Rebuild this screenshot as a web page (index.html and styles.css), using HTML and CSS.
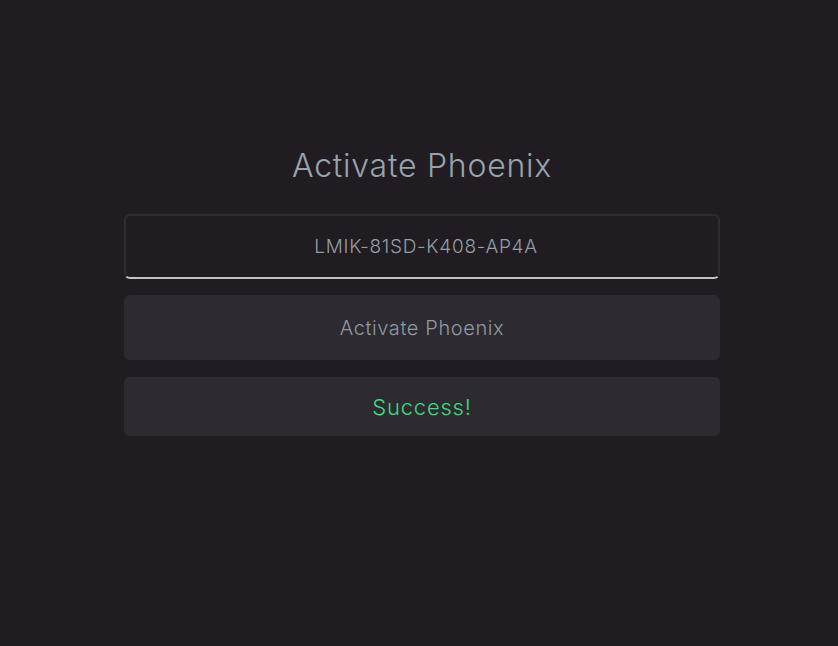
FILE: index.html
```html
<!DOCTYPE html>
<html>
<head>
<meta charset="utf-8">
<link rel="stylesheet" href="styles.css">
</head>
<body>
<main class="page">
  <section class="panel">
    <h1 class="title">Activate Phoenix</h1>
    <input class="key-input" type="text" value="LMIK-81SD-K408-AP4A">
    <button class="activate-btn">Activate Phoenix</button>
    <div class="status">Success!</div>
  </section>
</main>
</body>
</html>
```
FILE: styles.css
```css
html, body {
  margin: 0;
  padding: 0;
  background: #201c22;
  height: 100%;
}
body {
  font-family: "Inter", "Open Sans", sans-serif;
  font-weight: 300;
}
.page {
  display: flex;
  justify-content: center;
  padding-top: 142px;
  padding-left: 6px;
}
.panel {
  width: 596px;
  display: flex;
  flex-direction: column;
}
.title {
  margin: 0 0 24px 0;
  text-align: center;
  font-weight: 300;
  font-size: 32px;
  line-height: 48px;
  color: #98a4ad;
  letter-spacing: 0.75px;
}
.key-input {
  box-sizing: border-box;
  height: 65px;
  width: 100%;
  padding: 0 0 0 8px;
  background: #201c22;
  border: 2px solid #302b33;
  border-bottom: 2px solid #c6c2c8;
  border-radius: 6px;
  text-align: center;
  font-family: inherit;
  font-weight: 300;
  font-size: 19px;
  letter-spacing: 0.7px;
  color: #939ea7;
  outline: none;
  margin: 0 0 16px 0;
}
.activate-btn {
  height: 65px;
  width: 100%;
  background: #2e2a31;
  border: none;
  border-radius: 6px;
  font-family: inherit;
  font-weight: 300;
  font-size: 20px;
  letter-spacing: 0.6px;
  color: #8f9aa3;
  margin: 0 0 17px 0;
}
.status {
  height: 59px;
  display: flex;
  align-items: center;
  justify-content: center;
  background: #2e2a31;
  border-radius: 5px;
  font-size: 22px;
  letter-spacing: 0.8px;
  color: #3bdc7c;
}
```
